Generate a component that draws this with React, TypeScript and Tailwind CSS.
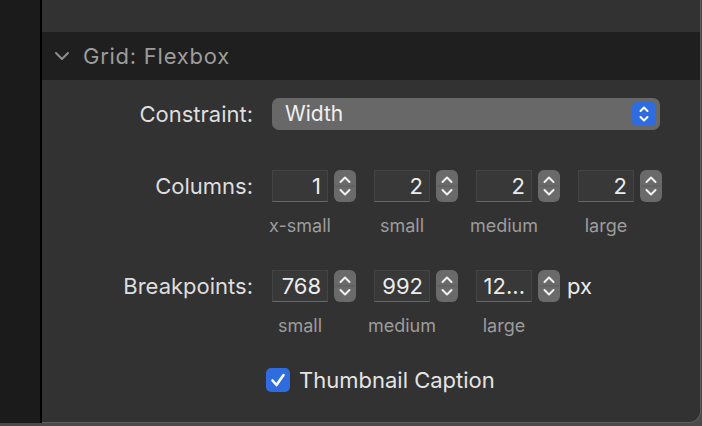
import React from "react";

const Stepper = () => (
  <div className="w-[22px] h-[32px] rounded-[6px] bg-[#6a6a6a] flex flex-col items-center justify-center shrink-0">
    <svg width="22" height="32" viewBox="0 0 22 32">
      <polyline points="6.5,12 11,7.5 15.5,12" fill="none" stroke="#f0f0f0" strokeWidth="2" strokeLinecap="round" strokeLinejoin="round" />
      <line x1="1" y1="16" x2="21" y2="16" stroke="#5a5a5a" strokeWidth="1" />
      <polyline points="6.5,20 11,24.5 15.5,20" fill="none" stroke="#f0f0f0" strokeWidth="2" strokeLinecap="round" strokeLinejoin="round" />
    </svg>
  </div>
);

const NumField = ({ value }: { value: string }) => (
  <div className="flex items-center gap-[6px]">
    <div className="w-[56px] h-[32px] bg-[#383838] border border-[#444444] border-b-[#686868] flex items-center justify-end pr-[6px] text-[22px] text-[#ececec] leading-none whitespace-nowrap">
      {value}
    </div>
    <Stepper />
  </div>
);

const Sub = ({ children }: { children: React.ReactNode }) => (
  <div className="w-[102px]">
    <div className="w-[56px] flex justify-center whitespace-nowrap">{children}</div>
  </div>
);

export default function App() {
  const font = { fontFamily: "Inter, 'Noto Sans', sans-serif" };
  return (
    <div className="w-[702px] h-[426px] bg-[#4a4a4a] overflow-hidden" style={font}>
      <div className="flex h-[423px]">
        <div className="w-[40px] bg-[#1b1b1b]" />
        <div className="w-[2px] bg-black" />
        <div className="w-[659px] bg-[#323232] border-r border-b border-[#5c5c5c] rounded-br-[12px] flex flex-col">
          <div className="h-[32px]" />
          <div className="h-[48px] bg-[#1f1f1f] flex items-center pl-[12px] gap-[13px]">
            <svg width="16" height="16" viewBox="0 0 16 16">
              <polyline points="2,5 8,11 14,5" fill="none" stroke="#8e8e8e" strokeWidth="2" strokeLinecap="round" strokeLinejoin="round" />
            </svg>
            <span className="text-[22px] leading-[32px] text-[#9c9c9c] tracking-[0.75px] whitespace-nowrap">Grid: Flexbox</span>
          </div>
          <div className="grid grid-cols-[211px_1fr] gap-x-[19px] items-center mt-[18px]">
            <div className="text-right text-[22px] leading-[32px] text-[#dedede] whitespace-nowrap">Constraint:</div>
            <div className="w-[388px] h-[32px] rounded-[7px] bg-[#686868] flex items-center justify-between pl-[13px] pr-[4px]">
              <span className="text-[21px] leading-[32px] text-[#f0f0f0]">Width</span>
              <div className="w-[24px] h-[24px] rounded-[5px] bg-[#2f6ce0] flex items-center justify-center">
                <svg width="24" height="24" viewBox="0 0 24 24">
                  <polyline points="8.5,9 12,5.5 15.5,9" fill="none" stroke="#ffffff" strokeWidth="2" strokeLinecap="round" strokeLinejoin="round" />
                  <polyline points="8.5,15 12,18.5 15.5,15" fill="none" stroke="#ffffff" strokeWidth="2" strokeLinecap="round" strokeLinejoin="round" />
                </svg>
              </div>
            </div>
          </div>
          <div className="grid grid-cols-[211px_1fr] gap-x-[19px] items-center mt-[40px]">
            <div className="text-right text-[22px] leading-[32px] text-[#dedede] whitespace-nowrap">Columns:</div>
            <div className="flex gap-[18px]">
              <NumField value="1" />
              <NumField value="2" />
              <NumField value="2" />
              <NumField value="2" />
            </div>
          </div>
          <div className="flex ml-[230px] mt-[10px] text-[18px] leading-[27px] text-[#9c9c9c]">
            <Sub>x-small</Sub>
            <Sub>small</Sub>
            <Sub>medium</Sub>
            <Sub>large</Sub>
          </div>
          <div className="grid grid-cols-[211px_1fr] gap-x-[19px] items-center mt-[31px]">
            <div className="text-right text-[22px] leading-[32px] text-[#dedede] whitespace-nowrap">Breakpoints:</div>
            <div className="flex gap-[18px] items-center">
              <NumField value="768" />
              <NumField value="992" />
              <div className="flex items-center gap-[6px]">
                <div className="w-[56px] h-[32px] bg-[#383838] border border-[#444444] border-b-[#686868] flex items-center justify-end pr-[6px] text-[22px] text-[#ececec] leading-none whitespace-nowrap">
                  12...
                </div>
                <Stepper />
                <span className="text-[22px] leading-[32px] text-[#ececec] ml-[1px]">px</span>
              </div>
            </div>
          </div>
          <div className="flex ml-[230px] mt-[10px] text-[18px] leading-[27px] text-[#9c9c9c]">
            <Sub>small</Sub>
            <Sub>medium</Sub>
            <Sub>large</Sub>
          </div>
          <div className="flex items-center h-[32px] ml-[224px] mt-[25px] gap-[9px]">
            <div className="w-[24px] h-[24px] rounded-[5px] bg-[#2f6ce0] flex items-center justify-center">
              <svg width="24" height="24" viewBox="0 0 24 24">
                <polyline points="6.5,12.5 10.5,17 17.5,7" fill="none" stroke="#ffffff" strokeWidth="2.6" strokeLinecap="round" strokeLinejoin="round" />
              </svg>
            </div>
            <span className="text-[22px] leading-[32px] text-[#e4e4e4] whitespace-nowrap">Thumbnail Caption</span>
          </div>
        </div>
      </div>
    </div>
  );
}
